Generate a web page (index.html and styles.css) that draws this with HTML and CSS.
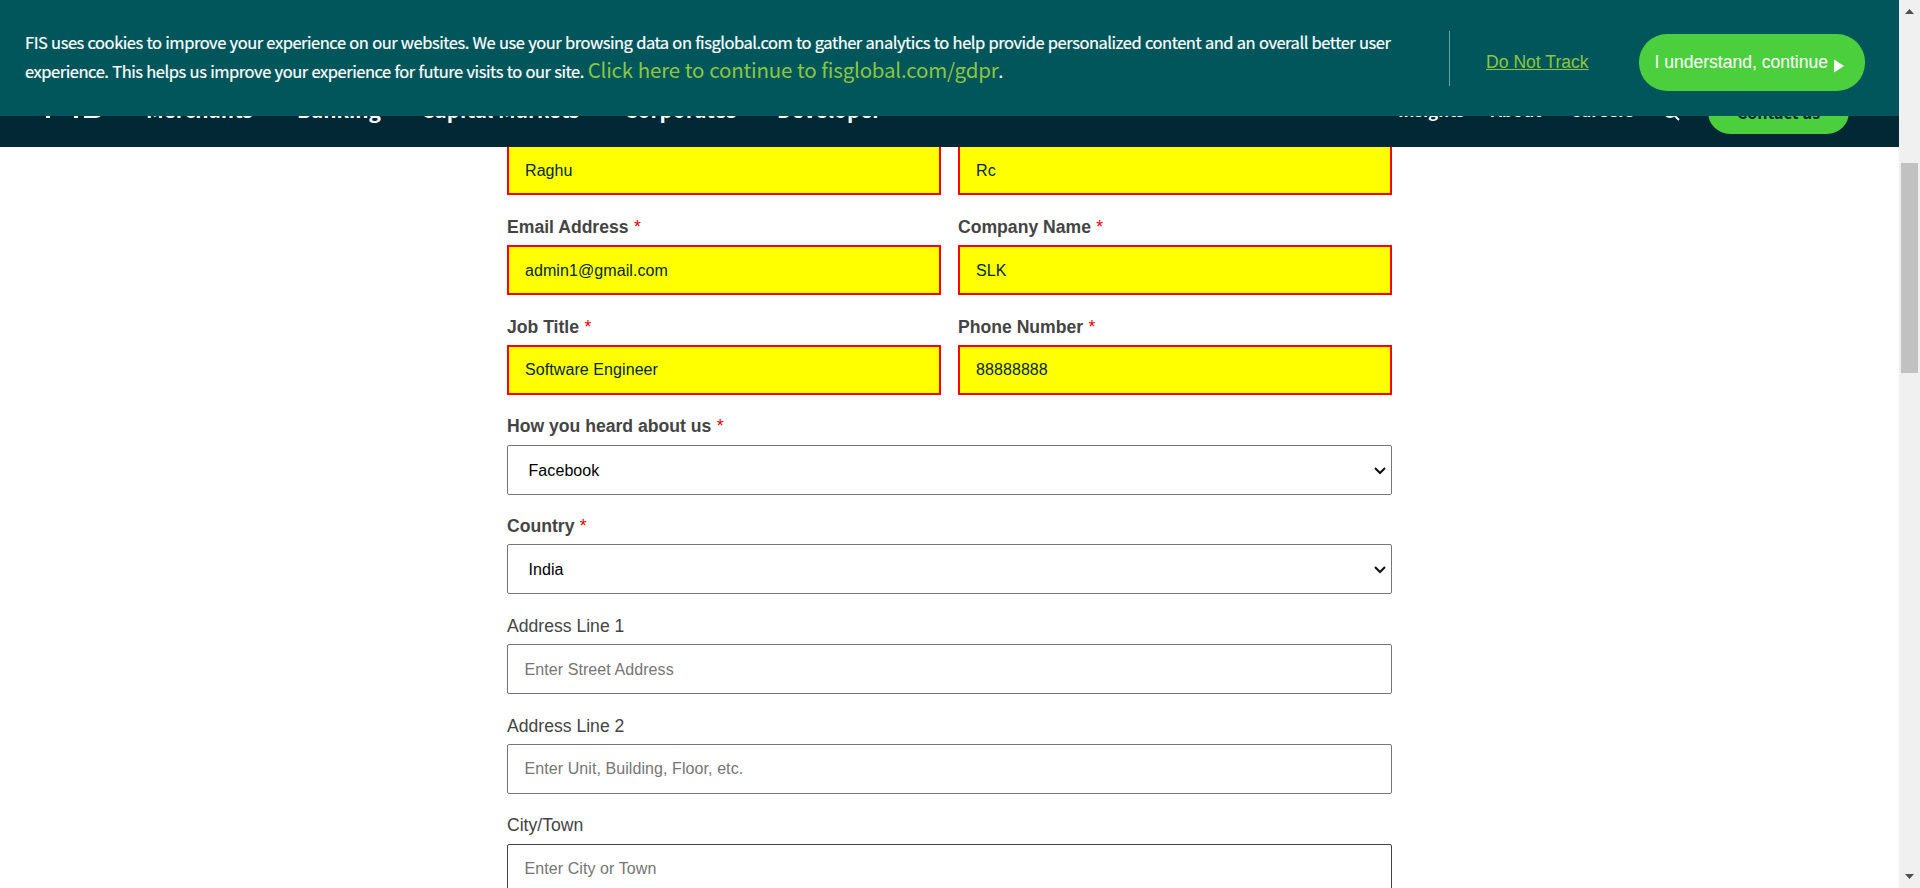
FILE: index.html
```
<!DOCTYPE html>
<html lang="en">
<head>
<meta charset="utf-8">
<title>FIS - Contact us</title>
<link rel="stylesheet" href="styles.css">
</head>
<body>
<div class="page">
  <header class="site-header">
    <svg class="logo" width="60" height="40" viewBox="0 0 60 40" fill="none" stroke="#fff" stroke-width="4"><path d="M2 39V8H24M2 22H20M30 39V6M55 8H44Q38 8 38 15T44 22H50Q56 22 56 29T50 37H38"/></svg>
    <nav class="main-nav">
      <a class="merchants">Merchants</a><a class="banking">Banking</a><a class="capital">Capital Markets</a><a class="corporates">Corporates</a><a class="developer">Developer</a>
    </nav>
    <nav class="side-nav">
      <a class="insights">Insights</a><a class="about">About</a><a class="careers">Careers</a>
    </nav>
    <svg class="search" width="18" height="18" viewBox="0 0 18 18" fill="none" stroke="#fff" stroke-width="1.800"><circle cx="8" cy="8" r="6"/><path d="M12.500 12.500L17 17"/></svg>
    <a class="contact">Contact us</a>
  </header>
  <section class="cookie">
    <p class="cookie-text"><span class="line1">FIS uses cookies to improve your experience on our websites. We use your browsing data on fisglobal.com to gather analytics to help provide personalized content and an overall better user</span><br><span class="line2">experience. This helps us improve your experience for future visits to our site. </span><a class="gdpr">Click here to continue to fisglobal.com/gdpr</a>.</p>
    <div class="divider"></div>
    <a class="track">Do Not Track</a>
    <button class="accept"><span>I understand, continue</span><svg width="10" height="14" viewBox="0 0 10 14"><path d="M0 .5L10 7L0 13.500Z" fill="#fff"/></svg></button>
  </section>
  <main class="form">
    <div class="row">
      <div class="field"><div class="input error">Raghu</div></div>
      <div class="field"><div class="input error">Rc</div></div>
    </div>
    <div class="row">
      <div class="field"><label class="required">Email Address <i>*</i></label><div class="input error">admin1@gmail.com</div></div>
      <div class="field"><label class="required">Company Name <i>*</i></label><div class="input error">SLK</div></div>
    </div>
    <div class="row">
      <div class="field"><label class="required">Job Title <i>*</i></label><div class="input error">Software Engineer</div></div>
      <div class="field"><label class="required">Phone Number <i>*</i></label><div class="input error">88888888</div></div>
    </div>
    <div class="field"><label class="required">How you heard about us <i>*</i></label><div class="input select">Facebook<svg width="12" height="8" viewBox="0 0 12 8"><path d="M1 1L6 6L11 1" fill="none" stroke="#111" stroke-width="2"/></svg></div></div>
    <div class="field"><label class="required">Country <i>*</i></label><div class="input select">India<svg width="12" height="8" viewBox="0 0 12 8"><path d="M1 1L6 6L11 1" fill="none" stroke="#111" stroke-width="2"/></svg></div></div>
    <div class="field"><label>Address Line 1</label><div class="input empty">Enter Street Address</div></div>
    <div class="field"><label>Address Line 2</label><div class="input empty">Enter Unit, Building, Floor, etc.</div></div>
    <div class="field"><label>City/Town</label><div class="input empty hover">Enter City or Town</div></div>
  </main>
</div>
<aside class="scrollbar">
  <svg width="9" height="5" viewBox="0 0 9 5"><path d="M0 5L4.500 0L9 5Z" fill="#505050"/></svg>
  <div class="thumb"></div>
  <svg class="down" width="9" height="5" viewBox="0 0 9 5"><path d="M0 0H9L4.500 5Z" fill="#505050"/></svg>
</aside>
</body>
</html>
```
FILE: styles.css
```
* { box-sizing: border-box; }
body { margin: 0; height: 888px; overflow: hidden; display: flex; background: #fff; font-family: "Liberation Sans", Arial, sans-serif; }
.page { position: relative; width: 1899px; height: 888px; overflow: hidden; }

.site-header { position: absolute; z-index: 1; left: 0; top: 0; width: 100%; height: 147px; padding: 0 50px 0 46px; background: #022836; display: flex; align-items: flex-end; color: #fff; font-family: "Noto Sans CJK SC", "Noto Sans", sans-serif; font-weight: 700; }
.logo { margin-bottom: 28px; flex: none; }
.main-nav { display: flex; margin-left: 40px; height: 53px; font-size: 20.700px; line-height: 31px; white-space: nowrap; }
.main-nav a { flex: none; }
.merchants { width: 151px; }
.banking { width: 124px; }
.capital { width: 203px; }
.corporates { width: 153px; }
.side-nav { display: flex; margin-left: auto; height: 50px; font-size: 17px; line-height: 26px; white-space: nowrap; }
.insights { width: 93px; }
.about { width: 79px; }
.careers { width: 92px; }
.search { flex: none; margin: 0 28px 26px 0; }
.contact { width: 141px; height: 44px; margin-bottom: 13px; border-radius: 22px; background: #4ccf3c; color: #022836; font-size: 16px; line-height: 16px; padding-top: 14px; text-align: center; }

.cookie { position: absolute; z-index: 2; left: 0; top: 0; width: 100%; height: 116px; padding-left: 25px; background: #00565b; display: flex; align-items: flex-start; color: #fff; }
.cookie-text { width: 1424px; margin: 28px 0 0; font: 400 16.500px/29px "Noto Sans CJK SC", "Noto Sans", sans-serif; letter-spacing: -0.470px; word-spacing: 0.500px; white-space: nowrap; -webkit-text-stroke: 0.200px #fff; }
.line2 { letter-spacing: -0.455px; }
.gdpr { color: #8cc63f; font-size: 20.500px; line-height: 20px; letter-spacing: -0.200px; -webkit-text-stroke: 0; }
.divider { width: 1px; height: 55px; margin-top: 31px; background: #66a5a5; }
.track { margin: 52px 0 0 36px; width: 153px; color: #8cc63f; font-size: 17.600px; line-height: 21px; text-decoration: underline; white-space: nowrap; }
.accept { display: flex; width: 226px; height: 57px; margin: 34px 0 0; padding: 17px 0 0 15.500px; border: 0; border-radius: 28px; background: #4ccf3c; color: #fff; font: 17.600px/22px "Liberation Sans", Arial, sans-serif; letter-spacing: -0.030px; align-items: flex-start; white-space: nowrap; }
.accept svg { margin: 8px 0 0 6px; flex: none; }

.form { width: 885px; margin: 145.450px 0 0 507px; display: flex; flex-direction: column; gap: 19.750px; }
.row { display: grid; grid-template-columns: 434px 434px; column-gap: 17px; }
.field label { display: block; height: 30px; padding-top: 1.700px; color: #444; font-size: 17.600px; line-height: 21px; white-space: nowrap; }
.required { font-weight: 700; }
.required i { margin-left: 0.500px; color: #e00000; font-style: normal; font-weight: 400; }
.input { height: 50px; padding: 1px 15.500px 0 16px; border: 1px solid #767676; border-radius: 2px; display: flex; align-items: center; color: #022836; font-size: 16px; letter-spacing: 0.080px; }
.error { border: 2px solid #f00; border-radius: 0; background: #ff0; }
.select { padding: 2px 5px 0 20.500px; justify-content: space-between; color: #000; }
.empty { padding-left: 16.500px; color: #757575; }
.hover { border-color: #444; }

.scrollbar { width: 21px; height: 888px; background: #f0f0f0; display: flex; flex-direction: column; align-items: center; padding: 9px 0; }
.thumb { width: 17px; height: 210px; margin-top: 149px; background: #c1c1c1; }
.down { margin-top: auto; }
```
